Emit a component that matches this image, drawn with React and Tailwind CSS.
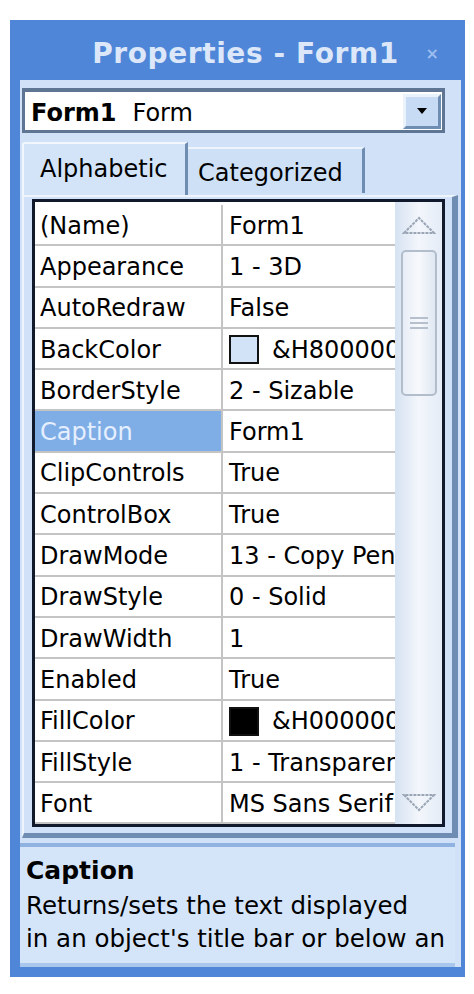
import React from 'react';

const rows = [
  { name: '(Name)', value: 'Form1' },
  { name: 'Appearance', value: '1 - 3D' },
  { name: 'AutoRedraw', value: 'False' },
  { name: 'BackColor', value: '&H8000000F&', swatch: 'bg-[#d2e3f7]' },
  { name: 'BorderStyle', value: '2 - Sizable' },
  { name: 'Caption', value: 'Form1', selected: true },
  { name: 'ClipControls', value: 'True' },
  { name: 'ControlBox', value: 'True' },
  { name: 'DrawMode', value: '13 - Copy Pen' },
  { name: 'DrawStyle', value: '0 - Solid' },
  { name: 'DrawWidth', value: '1' },
  { name: 'Enabled', value: 'True' },
  { name: 'FillColor', value: '&H00000000&', swatch: 'bg-black' },
  { name: 'FillStyle', value: '1 - Transparent' },
  { name: 'Font', value: 'MS Sans Serif' },
];

const ScrollBar = () => (
  <div className="w-[47px] flex flex-col items-center bg-linear-to-r from-[#d6e2f2] via-[#f3f6fb] to-[#e4ecf7]">
    {/* up arrow */}
    <svg width="34" height="22" viewBox="0 0 34 22" className="mt-[12px]">
      <path d="M2 19 L17 4 L32 19 Z" fill="none" stroke="#9aa5b5" strokeWidth="2" strokeDasharray="3 1" />
    </svg>
    {/* thumb */}
    <div className="mt-[14px] w-[36px] h-[146px] rounded-[5px] border-2 border-[#b2bdcc] bg-linear-to-r from-[#e8eef7] via-[#f7f9fc] to-[#dfe7f2] flex flex-col items-center justify-center gap-[3px]">
      <div className="w-[18px] h-[2px] bg-[#b6c0cd]" />
      <div className="w-[18px] h-[2px] bg-[#b6c0cd]" />
      <div className="w-[18px] h-[2px] bg-[#b6c0cd]" />
    </div>
    <div className="flex-1" />
    {/* down arrow */}
    <svg width="34" height="22" viewBox="0 0 34 22" className="mb-[10px]">
      <path d="M2 3 L17 18 L32 3 Z" fill="none" stroke="#9aa5b5" strokeWidth="2" strokeDasharray="3 1" />
    </svg>
  </div>
);

export default function App() {
  return (
    <div className="min-h-screen bg-white pt-[20px] pl-[10px] font-['DejaVu_Sans',sans-serif] text-black">
      <div className="w-[455px] h-[957px] bg-[#4f86d7] pl-[10px] pr-[4px] pb-[10px] flex flex-col">
        {/* Title bar */}
        <div className="h-[60px] shrink-0 flex items-center pt-[8px] relative">
          <div className="w-full text-center pl-[10px] text-[28px] font-bold text-[#dce8fa] tracking-[0.6px]">
            Properties - Form1
          </div>
          <span className="absolute right-[22px] top-[22px] text-[16px] font-bold text-[#9cbdf0]">×</span>
        </div>

        {/* Body */}
        <div className="flex-1 bg-[#d1e2f8] flex flex-col">
          {/* Object combo */}
          <div className="mt-[8px] ml-[2px] w-[423px] h-[45px] border-[3px] border-t-[4px] border-[#5f7594] bg-white flex items-center">
            <div className="flex-1 pl-[6px] pt-[3px] text-[24px] leading-none whitespace-nowrap">
              <span className="font-bold">Form1</span>
              <span className="ml-[16px]">Form</span>
            </div>
            <div className="w-[38px] h-[35px] mr-[1px] bg-[#c7dbf5] border-[3px] border-t-[#eaf2fc] border-l-[#eaf2fc] border-r-[#6f8cb3] border-b-[#6f8cb3] flex items-center justify-center">
              <svg width="10" height="6" viewBox="0 0 10 6">
                <path d="M0 0 H10 L5 6 Z" fill="#000" />
              </svg>
            </div>
          </div>

          {/* Tabs */}
          <div className="mt-[9px] ml-[2px] flex items-end h-[53px]">
            <div className="w-[166px] h-[53px] bg-[#d3e4f8] border-t-2 border-l-2 border-[#f2f7fd] border-r-[3px] border-r-[#6f8cb3] rounded-tl-[3px] pl-[16px] pt-[13px] text-[24px] leading-none">
              Alphabetic
            </div>
            <div className="w-[177px] h-[46px] mb-[2px] bg-[#cde0f6] border-t-2 border-[#eef4fc] border-r-[3px] border-r-[#6f8cb3] pl-[10px] pt-[12px] text-[24px] leading-none">
              Categorized
            </div>
          </div>

          {/* Tab page */}
          <div className="ml-[2px] w-[436px] h-[643px] border-t-2 border-l-2 border-[#eef4fc] border-r-[6px] border-b-[5px] border-r-[#6f8cb3] border-b-[#6f8cb3] pl-[8px] pr-[7px] pt-[2px] pb-[6px]">
            <div className="h-full border-[3px] border-[#111a2c] bg-white flex">
              <div className="flex-1 flex flex-col overflow-hidden pt-[3px]">
                {rows.map((r) => (
                  <div key={r.name} className="h-[41.3px] shrink-0 flex border-b-2 border-[#c4c4c4] text-[24px] leading-none">
                    <div
                      className={`w-[188px] shrink-0 border-r-2 border-[#c4c4c4] pl-[5px] pt-[2px] flex items-center whitespace-nowrap ${
                        r.selected ? 'bg-[#7faee6] text-[#e6efff]' : ''
                      }`}
                    >
                      {r.name}
                    </div>
                    <div className="flex-1 pl-[6px] pt-[2px] flex items-center whitespace-nowrap overflow-hidden">
                      {r.swatch && (
                        <span className={`w-[30px] h-[29px] shrink-0 border-2 border-[#111] mr-[13px] ${r.swatch}`} />
                      )}
                      {r.value}
                    </div>
                  </div>
                ))}
              </div>
              <ScrollBar />
            </div>
          </div>

          {/* Description */}
          <div className="mt-[5px] w-[435px] flex-1 border-t-[4px] border-[#8fb2e0] border-b-[4px] border-b-[#a9c6ec] bg-[#d5e5f9] pl-[6px] pt-[6px] overflow-hidden">
            <div className="text-[25px] font-bold leading-[36px]">Caption</div>
            <div className="text-[24.5px] leading-[33px] whitespace-nowrap">Returns/sets the text displayed</div>
            <div className="text-[24.5px] leading-[33px] whitespace-nowrap">in an object's title bar or below an</div>
          </div>
        </div>
      </div>
    </div>
  );
}
